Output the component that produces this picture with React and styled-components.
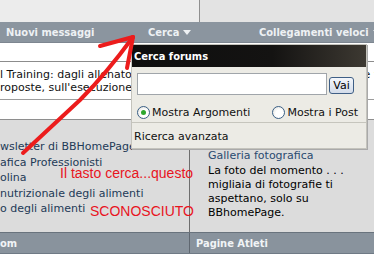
import React from 'react';
import styled, { createGlobalStyle } from 'styled-components';

const GlobalStyle = createGlobalStyle`
  html, body {
    margin: 0;
    padding: 0;
    background: #ffffff;
  }
  body {
    font-family: "DejaVu Sans", Verdana, sans-serif;
    font-size: 11px;
    color: #000;
  }
`;

const condensed = `"DejaVu Sans Condensed", "DejaVu Sans", sans-serif`;

const Page = styled.div`
  position: relative;
  width: 374px;
  height: 278px;
  overflow: hidden;
  background: #ffffff;
`;

const TopStrip = styled.div`
  display: grid;
  grid-template-columns: 200px 1fr;
  height: 22px;
`;

const TopCell = styled.div`
  background: ${(p) => (p.$first ? '#ececec' : '#e3e3e3')};
  border-right: ${(p) => (p.$first ? '1px solid #8f8f8f' : 'none')};
`;

const NavBar = styled.div`
  display: grid;
  grid-template-columns: 142px 111px 1fr;
  height: 20px;
  background: #8b959f;
  border-bottom: 1px solid #7d8690;
`;

const NavItem = styled.div`
  display: flex;
  align-items: center;
  gap: 4px;
  padding: 0 6px;
  white-space: nowrap;
  font-family: ${condensed};
  font-stretch: condensed;
  font-weight: bold;
  font-size: 11px;
  color: #eef1f4;
`;

const Caret = styled.span`
  width: 0;
  height: 0;
  border-left: 4px solid transparent;
  border-right: 4px solid transparent;
  border-top: 5px solid #eef1f4;
  margin-top: 1px;
`;

const BlankRow = styled.div`
  height: 18px;
  background: #ffffff;
  border-bottom: 1px solid #8c8c8c;
`;

const ThreadRow = styled.div`
  height: 38px;
  padding-top: 7px;
  box-sizing: border-box;
  background: #ffffff;
  border-bottom: 1px solid #9c9c9c;
  line-height: 12.5px;
  white-space: nowrap;
  color: #111;
`;

const BoxRow = styled.div`
  height: 19px;
  background: #ffffff;
  border-bottom: 1px solid #8e8e8e;
`;

const Columns = styled.div`
  display: grid;
  grid-template-columns: 190px 1fr;
  height: 112px;
  background: #dcdcdc;
`;

const LeftCol = styled.div`
  border-right: 1px solid #6e6e6e;
  padding-top: 19px;
  white-space: nowrap;
  overflow: hidden;
`;

const ListLink = styled.div`
  line-height: 15.5px;
  color: #233a57;
`;

const RightCol = styled.div`
  padding: 29px 0 0 18px;
  white-space: nowrap;
`;

const GalleryLink = styled.div`
  line-height: 14px;
  color: #2a4a70;
`;

const GalleryText = styled.div`
  margin-top: 1px;
  line-height: 14px;
  color: #000;
`;

const FooterBar = styled.div`
  display: grid;
  grid-template-columns: 190px 1fr;
  height: 20px;
  background: #89939d;
  border-top: 1px solid #69737d;
  border-bottom: 1px solid #6f7a85;
`;

const FooterCell = styled.div`
  display: flex;
  align-items: center;
  padding-left: ${(p) => (p.$right ? '6px' : '0')};
  border-right: ${(p) => (p.$right ? 'none' : '1px solid #5f6770')};
  font-family: ${condensed};
  font-stretch: condensed;
  font-weight: bold;
  font-size: 11px;
  color: #f1f4f6;
  white-space: nowrap;
`;

/* popup menu laid over the page */
const SearchMenu = styled.div`
  position: absolute;
  left: 131px;
  top: 44px;
  width: 234px;
  border: 1px solid #c4c3bc;
  background: #ecebe5;
  box-shadow: 1px 1px 0 #a9a9a9;
`;

const MenuHeader = styled.div`
  height: 22px;
  display: flex;
  align-items: center;
  padding-left: 2px;
  background: linear-gradient(90deg, #0e0e0e 0%, #141312 60%, #3d3932 100%);
  font-family: ${condensed};
  font-stretch: condensed;
  font-weight: bold;
  font-size: 11px;
  color: #ffffff;
`;

const InputRow = styled.div`
  display: flex;
  align-items: center;
  gap: 2px;
  padding: 6px 0 0 5px;
`;

const SearchInput = styled.div`
  width: 188px;
  height: 20px;
  background: #ffffff;
  border: 1px solid #a0a5aa;
`;

const GoButton = styled.button`
  width: 25px;
  height: 17px;
  margin-top: 3px;
  padding: 0;
  border: 1px solid #3f5f86;
  border-radius: 3px;
  background: linear-gradient(#f4f7fb, #d3dcea);
  font-family: "DejaVu Sans", Verdana, sans-serif;
  font-size: 11px;
  line-height: 13px;
  color: #000;
`;

const RadioRow = styled.div`
  display: flex;
  align-items: center;
  padding: 11px 0 3px 5px;
  line-height: 13px;
  color: #111;
`;

const RadioLabel = styled.label`
  display: flex;
  align-items: center;
  gap: 2px;
  margin-left: ${(p) => (p.$next ? '22px' : '0')};
  white-space: nowrap;
`;

const RadioDot = styled.span`
  position: relative;
  width: 11px;
  height: 11px;
  border-radius: 50%;
  border: 1px solid #3a5f85;
  background: radial-gradient(circle at 60% 60%, #ffffff 40%, #dcdcd6 100%);

  &::after {
    content: '';
    display: ${(p) => (p.$on ? 'block' : 'none')};
    position: absolute;
    left: 3px;
    top: 3px;
    width: 5px;
    height: 5px;
    border-radius: 50%;
    background: #2ea72e;
  }
`;

const MenuFoot = styled.div`
  border-top: 1px solid #c6c5bd;
  padding: 7px 0 4px 2px;
  line-height: 14px;
  color: #111;
`;

const Note = styled.div`
  position: absolute;
  left: ${(p) => p.$x}px;
  top: ${(p) => p.$y}px;
  font-family: "Liberation Sans", Arial, sans-serif;
  font-size: 14px;
  line-height: 16px;
  color: #e8141e;
  white-space: nowrap;
`;

const Overlay = styled.svg`
  position: absolute;
  left: 0;
  top: 0;
  pointer-events: none;
`;

const links = [
  'wsletter di BBHomePage',
  'afica Professionisti',
  'olina',
  'nutrizionale degli alimenti',
  'o degli alimenti',
];

export default function App() {
  return (
    <>
      <GlobalStyle />
      <Page>
        <TopStrip>
          <TopCell $first />
          <TopCell />
        </TopStrip>
        <NavBar>
          <NavItem>Nuovi messaggi</NavItem>
          <NavItem>
            Cerca <Caret />
          </NavItem>
          <NavItem>
            Collegamenti veloci <Caret />
          </NavItem>
        </NavBar>
        <BlankRow />
        <ThreadRow>
          <div>l Training: dagli allenatori alle diete, una guida completa su tutte le te</div>
          <div>roposte, sull'esecuzione</div>
        </ThreadRow>
        <BoxRow />
        <Columns>
          <LeftCol>
            {links.map((l) => (
              <ListLink key={l}>{l}</ListLink>
            ))}
          </LeftCol>
          <RightCol>
            <GalleryLink>Galleria fotografica</GalleryLink>
            <GalleryText>
              La foto del momento . . .<br />
              migliaia di fotografie ti<br />
              aspettano, solo su<br />
              BBhomePage.
            </GalleryText>
          </RightCol>
        </Columns>
        <FooterBar>
          <FooterCell>om</FooterCell>
          <FooterCell $right>Pagine Atleti</FooterCell>
        </FooterBar>

        <SearchMenu>
          <MenuHeader>Cerca forums</MenuHeader>
          <InputRow>
            <SearchInput />
            <GoButton>Vai</GoButton>
          </InputRow>
          <RadioRow>
            <RadioLabel>
              <RadioDot $on />
              Mostra Argomenti
            </RadioLabel>
            <RadioLabel $next>
              <RadioDot />
              Mostra i Post
            </RadioLabel>
          </RadioRow>
          <MenuFoot>Ricerca avanzata</MenuFoot>
        </SearchMenu>

        <Note $x={60} $y={165}>Il tasto cerca...questo</Note>
        <Note $x={90} $y={203}>SCONOSCIUTO</Note>

        <Overlay width="374" height="278" viewBox="0 0 374 278">
          <g fill="none" stroke="#ec1c1c" strokeWidth="4" strokeLinecap="round" strokeLinejoin="round">
            <path d="M23 153 L80 100 Q106 74 133 37" />
            <path d="M100 46 L133 37" />
            <path d="M127 68 L133 37" />
          </g>
        </Overlay>
      </Page>
    </>
  );
}
